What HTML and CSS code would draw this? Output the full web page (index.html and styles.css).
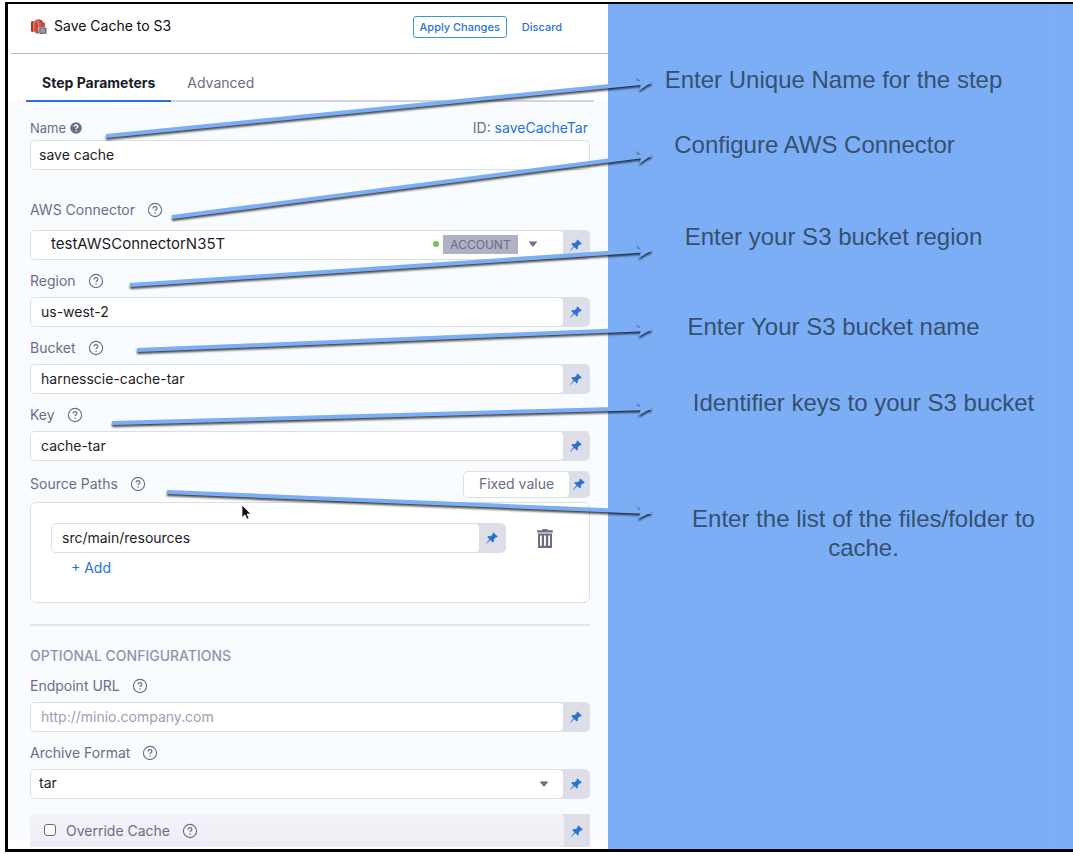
FILE: index.html
```html
<!DOCTYPE html>
<html lang="en">
<head>
<meta charset="utf-8">
<meta name="viewport" content="width=device-width, initial-scale=1">
<title>Save Cache to S3</title>
<link rel="stylesheet" href="styles.css">
</head>
<body>
<svg class="symbols" aria-hidden="true">
  <symbol id="pin" viewBox="0 0 16 16"><path d="M9.6 1.6 14.6 6.4 13.4 7.4 12.4 7 10 9.6 10.2 12 9 13 6.2 10.4 1.6 14.6 1.2 14.3 5.2 9.4 2.6 6.8 3.8 5.8 6.2 6 9 3.6 8.6 2.6Z"/></symbol>
  <symbol id="help" viewBox="0 0 16 16"><circle cx="8" cy="8" r="6.6" fill="none" stroke="currentColor" stroke-width="1.1"/><path d="M6.1 6.6c0-1.2.8-1.9 1.9-1.9s1.9.7 1.9 1.7c0 1.4-1.8 1.4-1.8 2.7" fill="none" stroke="currentColor" stroke-width="1.2"/><circle cx="8.1" cy="11" r=".8"/></symbol>
  <symbol id="caret" viewBox="0 0 10 6"><path d="M.6.5h8.8L5.6 5.2Q5 5.8 4.4 5.2Z"/></symbol>
</svg>

<div class="frame">
  <main class="panel">
    <header class="panel-header">
      <svg class="step-icon" viewBox="0 0 18 18" aria-hidden="true">
        <path fill="#a33b2c" d="M1 4 3.5 3v12L1 14Z"/>
        <path fill="#d65c47" d="M3.500 3 7 4.200v9.600L3.500 15Z"/>
        <path fill="#d65c47" d="M5.500 2 9 1v4H5.500Z"/>
        <path fill="#b8483a" d="M9 1l4 1.600V6L9 5Z"/>
        <path fill="#b8483a" d="M6 5h3v7H6Z"/>
        <path fill="#d65c47" d="M9 5h3.500v5H9Z"/>
        <path fill="#b8483a" d="M6 12h3V17l-3.500-1.500Z"/>
        <path fill="#d65c47" d="M13 4l3 1v5h-3Z"/>
        <path fill="#a33b2c" d="M12 3.600h1.500V10H12Z"/>
        <rect x="9.600" y="10" width="8" height="7" rx="1.500" fill="#74768f"/>
        <path d="M11.500 12.600h4M11.500 14.700h1.500M14.300 14.700h1.500" stroke="#dfe0ec" stroke-width=".9"/>
      </svg>
      <h1 class="step-title">Save Cache to S3</h1>
      <button class="button-apply" type="button">Apply Changes</button>
      <button class="button-discard" type="button">Discard</button>
    </header>

    <nav class="tabs">
      <a class="tab tab-active" href="#parameters">Step Parameters</a>
      <a class="tab" href="#advanced">Advanced</a>
    </nav>

    <form class="form" id="parameters">
      <div class="label-row label-row-first">
        <label class="name-label" for="name">Name</label>
        <svg class="help-solid" viewBox="0 0 12 12" aria-hidden="true"><circle cx="6" cy="6" r="5.800" fill="#6b6d85"/><path d="M4.200 4.700c0-1.100.800-1.700 1.800-1.700s1.800.600 1.800 1.500c0 1.200-1.700 1.200-1.700 2.400" fill="none" stroke="#fff" stroke-width="1.300"/><circle cx="6.100" cy="8.800" r=".8" fill="#fff"/></svg>
        <span class="step-id">ID: <a class="link" href="#id">saveCacheTar</a></span>
      </div>
      <div class="control"><input class="input input-tight" id="name" value="save cache"></div>

      <div class="label-row label-row-connector">
        <label for="connector">AWS Connector</label>
        <svg class="help"><use href="#help"/></svg>
      </div>
      <div class="control">
        <button class="input connector" id="connector" type="button">
          <span class="connector-name">testAWSConnectorN35T</span>
          <span class="status-dot"></span>
          <span class="scope">ACCOUNT</span>
          <svg class="caret"><use href="#caret"/></svg>
        </button>
        <button class="pin" type="button" aria-label="Value type"><svg><use href="#pin"/></svg></button>
      </div>

      <div class="label-row">
        <label for="region">Region</label>
        <svg class="help"><use href="#help"/></svg>
      </div>
      <div class="control">
        <input class="input" id="region" value="us-west-2">
        <button class="pin" type="button" aria-label="Value type"><svg><use href="#pin"/></svg></button>
      </div>

      <div class="label-row">
        <label for="bucket">Bucket</label>
        <svg class="help"><use href="#help"/></svg>
      </div>
      <div class="control">
        <input class="input" id="bucket" value="harnesscie-cache-tar">
        <button class="pin" type="button" aria-label="Value type"><svg><use href="#pin"/></svg></button>
      </div>

      <div class="label-row">
        <label for="key">Key</label>
        <svg class="help"><use href="#help"/></svg>
      </div>
      <div class="control">
        <input class="input" id="key" value="cache-tar">
        <button class="pin" type="button" aria-label="Value type"><svg><use href="#pin"/></svg></button>
      </div>

      <div class="label-row label-row-paths">
        <label for="path">Source Paths</label>
        <svg class="help"><use href="#help"/></svg>
        <div class="value-type">
          <button class="value-type-name" type="button">Fixed value</button>
          <button class="pin pin-small" type="button" aria-label="Value type"><svg><use href="#pin"/></svg></button>
        </div>
      </div>
      <div class="paths">
        <div class="path-row">
          <div class="control">
            <input class="input" id="path" value="src/main/resources">
            <button class="pin" type="button" aria-label="Value type"><svg><use href="#pin"/></svg></button>
          </div>
          <button class="remove" type="button" aria-label="Remove path">
            <svg viewBox="0 0 16 19"><path fill="#6b6d85" fill-rule="evenodd" d="M5.500 0h5v1.200H15.800V3.400H.2V1.200H5.500ZM1 4.600h14V19H1ZM3 6.400v10.400h1.800V6.400ZM7 6.400v10.400h1.900V6.400ZM11.200 6.400v10.400H13V6.400Z"/></svg>
          </button>
        </div>
        <button class="add" type="button">+ Add</button>
      </div>

      <hr class="divider">
      <h2 class="section-title">OPTIONAL CONFIGURATIONS</h2>

      <div class="label-row label-row-endpoint">
        <label for="endpoint">Endpoint URL</label>
        <svg class="help"><use href="#help"/></svg>
      </div>
      <div class="control">
        <input class="input" id="endpoint" placeholder="http://minio.company.com">
        <button class="pin" type="button" aria-label="Value type"><svg><use href="#pin"/></svg></button>
      </div>

      <div class="label-row">
        <label for="format">Archive Format</label>
        <svg class="help"><use href="#help"/></svg>
      </div>
      <div class="control">
        <div class="select-wrap">
          <select class="input input-tight" id="format"><option>tar</option></select>
          <svg class="caret select-caret"><use href="#caret"/></svg>
        </div>
        <button class="pin" type="button" aria-label="Value type"><svg><use href="#pin"/></svg></button>
      </div>

      <div class="override">
        <div class="override-main">
          <input class="checkbox" type="checkbox" id="override">
          <label for="override">Override Cache</label>
          <svg class="help"><use href="#help"/></svg>
        </div>
        <button class="pin" type="button" aria-label="Value type"><svg><use href="#pin"/></svg></button>
      </div>
    </form>
  </main>

  <aside class="callouts">
    <p class="callout callout-name">Enter Unique Name for the step</p>
    <p class="callout callout-connector">Configure AWS Connector</p>
    <p class="callout callout-region">Enter your S3 bucket region</p>
    <p class="callout callout-bucket">Enter Your S3 bucket name</p>
    <p class="callout callout-key">Identifier keys to your S3 bucket</p>
    <p class="callout callout-paths">Enter the list of the files/folder to cache.</p>
  </aside>
</div>

<svg class="arrows" viewBox="0 0 1073 854" preserveAspectRatio="none" aria-hidden="true">
  <defs>
    <marker id="head" markerUnits="userSpaceOnUse" markerWidth="20" markerHeight="20" refX="14" refY="10" orient="auto" overflow="visible">
      <path d="M15 10 0 3 4.500 10 1 17.500Z" fill="#7caef6"/>
    </marker>
  </defs>
  <g class="arrow-lines">
    <path d="M106 136 651 82" marker-end="url(#head)"/>
    <path d="M172 217 651 155" marker-end="url(#head)"/>
    <path d="M130 285 651 250" marker-end="url(#head)"/>
    <path d="M137 350 651 329" marker-end="url(#head)"/>
    <path d="M112 423 651 408" marker-end="url(#head)"/>
    <path d="M167 492 651 512" marker-end="url(#head)"/>
  </g>
  <path d="M242 505v12.500l3-2.700 2 4.400 2-.9-2-4.300h3.800Z" fill="#111" stroke="#fff" stroke-width=".7"/>
</svg>
</body>
</html>
```
FILE: styles.css
```css
:root {
  --blue: #2872d0;
  --sky: #7caef6;
  --muted: #6b6d85;
  --ink: #1c1c28;
  --line: #dedee8;
}

* { box-sizing: border-box; }

body {
  position: relative;
  display: flex;
  min-height: 100vh;
  margin: 0;
  padding: 2px 0 2px 5px;
  background: #fff;
  color: var(--ink);
  font: 14px/24px Inter, "Liberation Sans", sans-serif;
}

button, input, select { font: inherit; color: inherit; }
button { padding: 0; border: 0; background: none; cursor: pointer; }
a { text-decoration: none; }
.symbols { position: absolute; width: 0; height: 0; }

.frame {
  flex: 1;
  display: grid;
  grid-template-columns: 600fr 465fr;
  border: solid #000;
  border-width: 2px 0 3px 3px;
}

.panel { display: flex; flex-direction: column; min-width: 0; background: #fff; }

.panel-header {
  display: flex;
  align-items: center;
  height: 50px;
  margin-left: 3px;
  padding: 0 46px 4px 19px;
  border-bottom: 1px solid #b7b8cb;
}
.step-icon { width: 17px; height: 17px; margin-right: 7px; }
.step-title { flex: 1; margin: 0; padding-bottom: 2px; color: #0b0b0d; font-size: 14px; font-weight: 400; }
.button-apply, .button-discard { color: var(--blue); font-size: 11px; font-weight: 500; line-height: 20px; }
.button-apply { margin-right: 15px; padding: 0 6px; border: 1px solid #3c95dc; border-radius: 3px; }

.tabs {
  display: flex;
  height: 48px;
  margin: 0 14px 0 18px;
  border-bottom: 2px solid #d5d5e1;
}
.tab { height: 48px; padding: 17px 16px 0; color: var(--muted); }
.tab-active { border-bottom: 2px solid var(--blue); color: var(--ink); font-weight: 700; }

.form {
  flex: 1;
  padding: 14px 18px 2px 22px;
  background: linear-gradient(#f8fcff, #f8fcff) no-repeat 0 0 / 100% calc(100% - 9px);
}

.label-row { display: flex; align-items: center; height: 24px; margin: 9px 0 4px; color: var(--muted); }
.label-row-first { margin: 0; }
.label-row-connector { margin: 28px 0 8px; }
.label-row-paths { height: 28px; }
.label-row-endpoint { margin-top: 6px; }
.name-label { font-size: 13px; }
.help { width: 16px; height: 16px; margin-left: 12px; color: var(--muted); fill: currentColor; }
.help-solid { width: 12px; height: 12px; margin-left: 4px; }
.step-id { margin-left: auto; padding-right: 2px; }
.link { color: var(--blue); }

.control { display: flex; height: 30px; border: 1px solid var(--line); border-radius: 5px; background: var(--line); }
.input {
  flex: 1;
  min-width: 0;
  width: 100%;
  height: 28px;
  padding: 0 10px 2px;
  border: 0;
  border-radius: 4px;
  background: #fff;
  appearance: none;
}
.input-tight { padding: 0 8px 2px; }
.input::placeholder { color: #9ca0b0; opacity: 1; }
.pin { flex: none; display: flex; align-items: center; justify-content: center; width: 26px; }
.pin svg { width: 14px; height: 14px; fill: var(--blue); }
.pin-small { width: 20px; }

.connector { display: flex; align-items: center; padding: 0 25px 2px 20px; text-align: left; }
.connector-name { flex: 1; font-size: 15px; }
.status-dot { width: 6px; height: 6px; margin-right: 4px; border-radius: 50%; background: #67c558; }
.scope { width: 75px; margin-right: 10px; background: #b0b1c4; color: var(--muted); font-size: 12px; line-height: 19px; text-align: center; }
.caret { width: 10px; height: 6px; fill: var(--muted); }

.value-type { display: flex; height: 27px; margin-left: auto; border: 1px solid var(--line); border-radius: 5px; background: var(--line); }
.value-type-name { width: 105px; border-radius: 4px; background: #fff; color: var(--muted); }

.paths { height: 101px; padding: 20px; border: 1px solid var(--line); border-radius: 6px; background: #fff; }
.path-row { display: flex; align-items: center; }
.path-row .control { flex: 1; margin-right: 31px; }
.remove { width: 16px; height: 19px; margin-right: 16px; }
.remove svg { display: block; width: 16px; height: 19px; }
.add { display: block; margin: 3px 0 0 20px; color: var(--blue); }

.divider { height: 2px; margin: 21px 0 18px; border: 0; background: #e4e5ee; }
.section-title { margin: 0; color: #9293ab; font-size: 14px; font-weight: 500; line-height: 24px; }

.select-wrap { position: relative; flex: 1; display: flex; }
.select-caret { position: absolute; top: 11px; right: 14px; pointer-events: none; }

.override { display: flex; height: 33px; margin-top: 15px; background: var(--line); }
.override-main {
  flex: 1;
  display: flex;
  align-items: center;
  padding-left: 14px;
  border-radius: 0 4px 4px 0;
  background: linear-gradient(#f4f3f9, #eeedf5);
  color: var(--muted);
}
.checkbox { width: 12px; height: 12px; margin: 0 10px 2px 0; border: 1px solid var(--muted); border-radius: 3px; background: #fff; appearance: none; }

.callouts {
  padding: 61px 14px 0 0;
  background: var(--sky) linear-gradient(#80b1f7, #80b1f7) no-repeat right 22px top 0 / 1px 100%;
  color: #36506f;
  font: 24px/29px "Liberation Sans", Arial, sans-serif;
  text-align: center;
}
.callout { margin: 0; }
.callout-connector { margin-top: 36px; padding-right: 38px; }
.callout-region { margin-top: 63px; }
.callout-bucket { margin-top: 61px; }
.callout-key { margin-top: 47px; padding-left: 60px; }
.callout-paths { margin-top: 87px; padding-left: 60px; }

.arrows { position: absolute; inset: 0; width: 100%; height: 100%; pointer-events: none; }
.arrow-lines { fill: none; stroke: var(--sky); stroke-width: 4; filter: drop-shadow(0 2px 1px rgba(0, 0, 0, .75)); }
```
